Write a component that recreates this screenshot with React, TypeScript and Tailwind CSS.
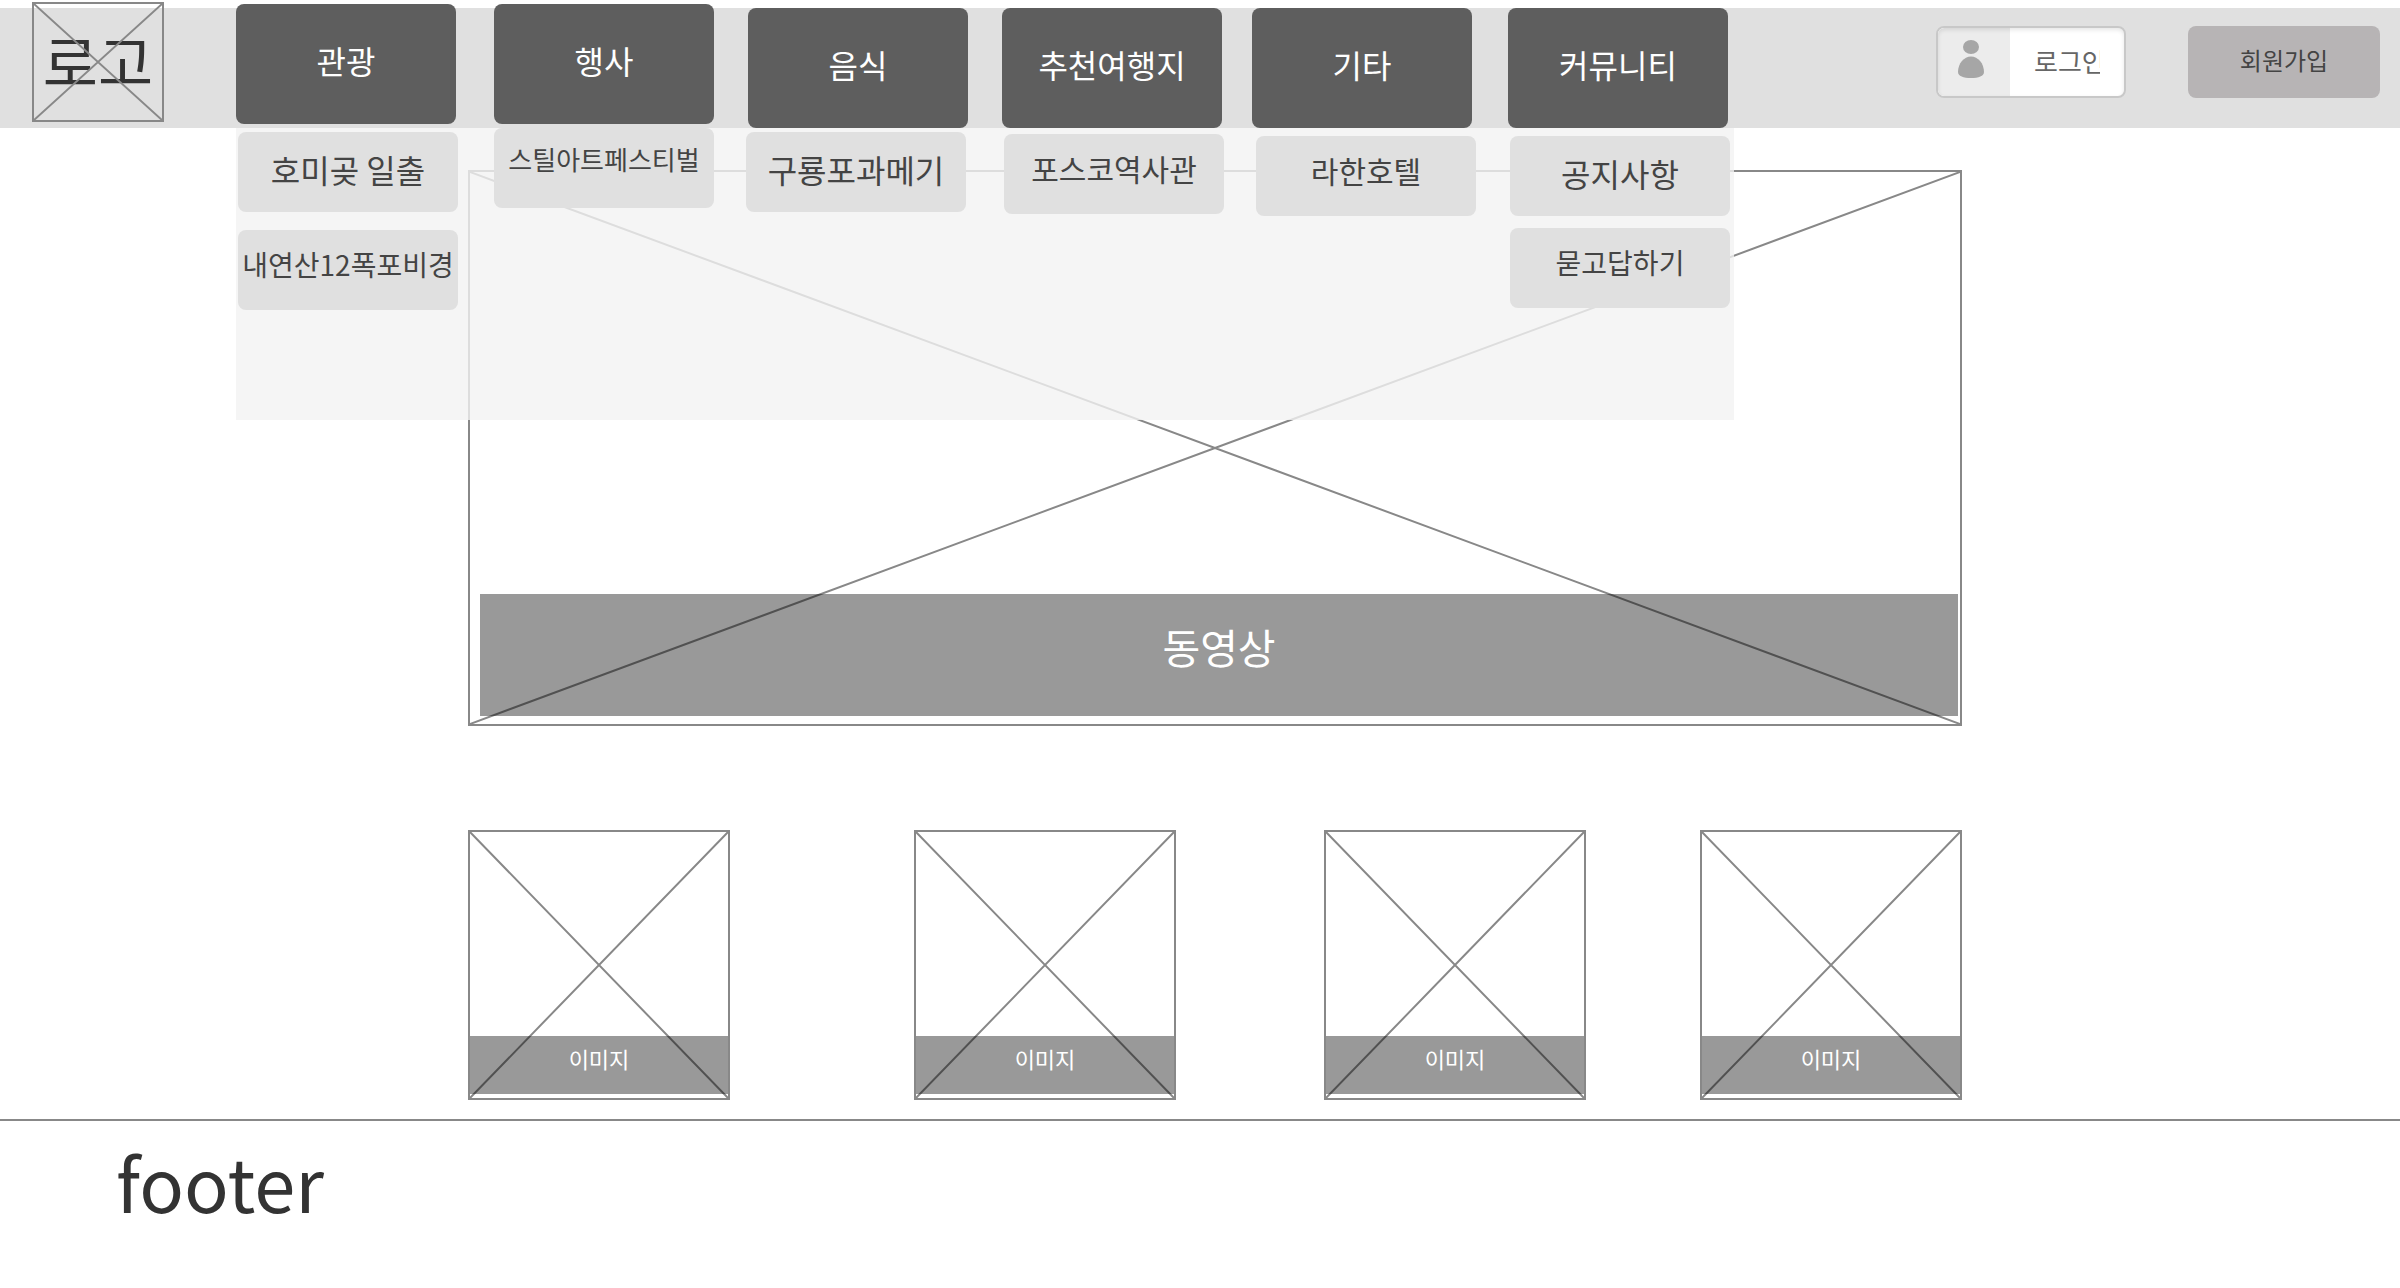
import type { ReactNode } from "react";

type SubItem = { label: string; size: string };
type MenuColumn = {
  label: string;
  place: string;
  subPlace: string;
  items: SubItem[];
};

const menu: MenuColumn[] = [
  {
    label: "관광",
    place: "col-start-1 -mt-1",
    subPlace: "col-start-1 pt-1 gap-4.5",
    items: [
      { label: "호미곶 일출", size: "pt-3.5 text-[32px]" },
      { label: "내연산12폭포비경", size: "pt-3.5 text-[28px]" },
    ],
  },
  {
    label: "행사",
    place: "col-start-3 -mt-1",
    subPlace: "col-start-3",
    items: [{ label: "스틸아트페스티벌", size: "pt-3 text-[26px]" }],
  },
  {
    label: "음식",
    place: "col-start-5",
    subPlace: "col-start-5 pt-1",
    items: [{ label: "구룡포과메기", size: "pt-3.5 text-[32px]" }],
  },
  {
    label: "추천여행지",
    place: "col-start-7",
    subPlace: "col-start-7 pt-1.5",
    items: [{ label: "포스코역사관", size: "pt-3 text-[30px]" }],
  },
  {
    label: "기타",
    place: "col-start-9",
    subPlace: "col-start-9 pt-2",
    items: [{ label: "라한호텔", size: "pt-3 text-[30px]" }],
  },
  {
    label: "커뮤니티",
    place: "col-start-11",
    subPlace: "col-start-11 pt-2 gap-3",
    items: [
      { label: "공지사항", size: "pt-3.5 text-[32px]" },
      { label: "묻고답하기", size: "pt-3.5 text-[28px]" },
    ],
  },
];

const cards = [
  { id: 1, place: "col-start-1" },
  { id: 2, place: "col-start-3" },
  { id: 3, place: "col-start-5" },
  { id: 4, place: "col-start-7" },
];

function Cross() {
  return (
    <svg
      className="pointer-events-none absolute inset-0 h-full w-full"
      viewBox="0 0 100 100"
      preserveAspectRatio="none"
      aria-hidden="true"
    >
      <path
        d="M0 0L100 100M100 0L0 100"
        stroke="#888888"
        strokeWidth="2"
        fill="none"
        vectorEffect="non-scaling-stroke"
      />
    </svg>
  );
}

function Placeholder({ className, children }: { className: string; children: ReactNode }) {
  return (
    <figure className={`relative flex flex-col justify-end border-2 border-[#888888] ${className}`}>
      <Cross />
      {children}
    </figure>
  );
}

function UserIcon() {
  return (
    <svg width="26" height="38" viewBox="0 0 26 38" fill="#a6a6a6" aria-hidden="true">
      <ellipse cx="13" cy="7" rx="8" ry="7" />
      <path d="M13 16.5C20 16.5 26 23.5 26 32C26 36 20.500 38 13 38C5.500 38 0 36 0 32C0 23.500 6 16.500 13 16.500Z" />
    </svg>
  );
}

function Header() {
  return (
    <header className="relative z-10 mt-2 flex h-30 items-start bg-[#e0e0e0]">
      <div className="w-[236px] shrink-0 pl-8">
        <a
          href="#"
          className="relative -mt-1.5 flex h-30 w-33 items-center justify-center border-2 border-[#888888] pb-1 text-[60px] leading-none text-[#333333]"
        >
          로고
          <Cross />
        </a>
      </div>

      <nav className="relative h-full min-w-0 flex-1">
        <div className="grid grid-cols-[220fr_38fr_220fr_34fr_220fr_34fr_220fr_30fr_220fr_36fr_220fr_6fr] items-start">
          {menu.map((column) => (
            <button
              key={column.label}
              type="button"
              className={`row-start-1 flex h-30 items-center justify-center rounded-lg bg-[#5e5e5e] pb-2 text-[32px] whitespace-nowrap text-white ${column.place}`}
            >
              {column.label}
            </button>
          ))}
        </div>
        <div className="absolute inset-x-0 top-full grid h-[292px] grid-cols-[220fr_36fr_220fr_32fr_220fr_38fr_220fr_32fr_220fr_34fr_220fr_4fr] items-start bg-[#f2f2f2]/80 pl-0.5">
          {menu.map((column) => (
            <ul key={column.label} className={`row-start-1 flex flex-col ${column.subPlace}`}>
              {column.items.map((item) => (
                <li key={item.label}>
                  <a
                    href="#"
                    className={`flex h-20 justify-center rounded-lg bg-[#e0e0e0] leading-[normal] whitespace-nowrap text-[#444444] ${item.size}`}
                  >
                    {item.label}
                  </a>
                </li>
              ))}
            </ul>
          ))}
        </div>
      </nav>

      <div className="flex w-[666px] shrink-0 justify-end gap-[62px] pt-4.5 pr-5">
        <label className="relative flex h-18 w-[190px] overflow-hidden rounded-lg border-2 border-[#c8c8c8] bg-white">
          <span className="flex w-18 shrink-0 justify-center bg-[#ececec] pt-3 pr-1.5">
            <UserIcon />
          </span>
          <input
            type="text"
            aria-label="로그인"
            defaultValue="로그인"
            className="mr-6 ml-6 min-w-0 flex-1 pb-1 text-[26px] text-[#666666] outline-none"
          />
          <span className="pointer-events-none absolute inset-0 rounded-md shadow-[inset_0_2px_4px_rgba(0,0,0,0.10)]" />
        </label>
        <button
          type="button"
          className="flex h-18 w-48 items-center justify-center rounded-lg bg-[#b7b4b5] pb-1 text-2xl text-[#444444]"
        >
          회원가입
        </button>
      </div>
    </header>
  );
}

export default function App() {
  return (
    <div className="flow-root min-h-screen bg-white font-['Noto_Sans_CJK_KR',sans-serif]">
      <Header />

      <main className="pt-[42px] pr-[18.25%] pl-[19.5%]">
        <Placeholder className="h-[556px] pr-0.5 pb-2 pl-2.5">
          <figcaption className="relative flex h-[122px] items-center justify-center bg-black/40 pb-4 text-[41px] text-white">
            동영상
          </figcaption>
        </Placeholder>

        <div className="mt-[104px] grid grid-cols-[262fr_184fr_262fr_148fr_262fr_114fr_262fr]">
          {cards.map((card) => (
            <Placeholder key={card.id} className={`row-start-1 h-[270px] pb-1 ${card.place}`}>
              <figcaption className="relative flex h-[58px] items-center justify-center bg-black/40 pb-3.5 text-[22px] text-white">
                이미지
              </figcaption>
            </Placeholder>
          ))}
        </div>
      </main>

      <footer className="mt-[19px] border-t-2 border-[#888888] pt-1.5 pl-29 text-[74px] leading-[normal] text-[#333333]">
        footer
      </footer>
    </div>
  );
}
